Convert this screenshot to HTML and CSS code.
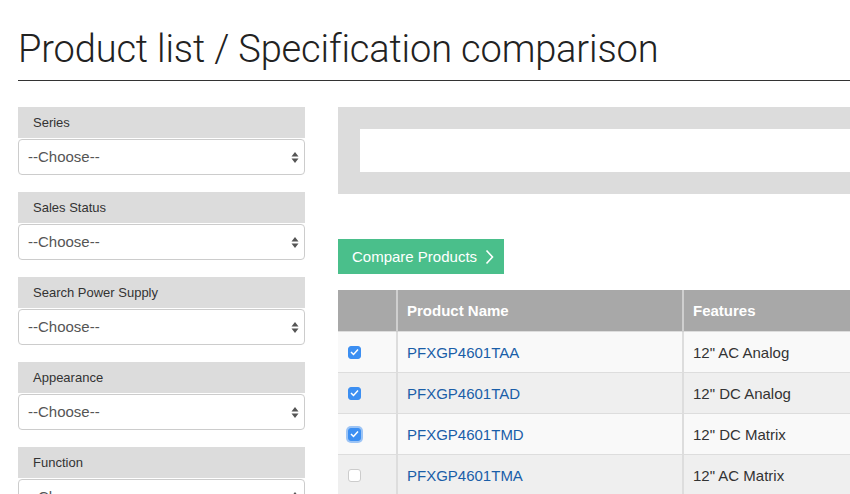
FILE: index.html
```html
<!DOCTYPE html>
<html>
<head>
<meta charset="utf-8">
<link rel="stylesheet" href="styles.css">
</head>
<body>
<div class="page">
  <h1 class="title">Product list / Specification comparison</h1>
  <div class="rule"></div>
  <div class="main">
    <aside class="filters">
      <div class="filter">
        <div class="flabel">Series</div>
        <div class="sel"><span>--Choose--</span><svg class="arr" width="8" height="13" viewBox="0 0 8 13"><path d="M4 1 L7.5 5.5 H0.5 Z M4 12 L7.5 7.5 H0.5 Z" fill="#555"/></svg></div>
      </div>
      <div class="filter">
        <div class="flabel">Sales Status</div>
        <div class="sel"><span>--Choose--</span><svg class="arr" width="8" height="13" viewBox="0 0 8 13"><path d="M4 1 L7.5 5.5 H0.5 Z M4 12 L7.5 7.5 H0.5 Z" fill="#555"/></svg></div>
      </div>
      <div class="filter">
        <div class="flabel">Search Power Supply</div>
        <div class="sel"><span>--Choose--</span><svg class="arr" width="8" height="13" viewBox="0 0 8 13"><path d="M4 1 L7.5 5.5 H0.5 Z M4 12 L7.5 7.5 H0.5 Z" fill="#555"/></svg></div>
      </div>
      <div class="filter">
        <div class="flabel">Appearance</div>
        <div class="sel"><span>--Choose--</span><svg class="arr" width="8" height="13" viewBox="0 0 8 13"><path d="M4 1 L7.5 5.5 H0.5 Z M4 12 L7.5 7.5 H0.5 Z" fill="#555"/></svg></div>
      </div>
      <div class="filter">
        <div class="flabel">Function</div>
        <div class="sel"><span>--Choose--</span><svg class="arr" width="8" height="13" viewBox="0 0 8 13"><path d="M4 1 L7.5 5.5 H0.5 Z M4 12 L7.5 7.5 H0.5 Z" fill="#555"/></svg></div>
      </div>
    </aside>
    <section class="content">
      <div class="searchbox"><div class="searchinner"></div></div>
      <button class="compare">Compare Products <svg width="9" height="16" viewBox="0 0 9 16"><path d="M1.5 1.5 L7.5 8 L1.5 14.5" fill="none" stroke="#fff" stroke-width="1.6"/></svg></button>
      <table class="ptable">
        <thead>
          <tr><th class="ck"></th><th class="name">Product Name</th><th>Features</th></tr>
        </thead>
        <tbody>
          <tr><td class="ck"><span class="cb on"><svg width="9" height="8" viewBox="0 0 9 8"><path d="M1 4 L3.5 6.5 L8 1.5" fill="none" stroke="#fff" stroke-width="1.5"/></svg></span></td><td><a href="#">PFXGP4601TAA</a></td><td>12" AC Analog</td></tr>
          <tr><td class="ck"><span class="cb on"><svg width="9" height="8" viewBox="0 0 9 8"><path d="M1 4 L3.5 6.5 L8 1.5" fill="none" stroke="#fff" stroke-width="1.5"/></svg></span></td><td><a href="#">PFXGP4601TAD</a></td><td>12" DC Analog</td></tr>
          <tr><td class="ck"><span class="cb on focus"><svg width="9" height="8" viewBox="0 0 9 8"><path d="M1 4 L3.5 6.5 L8 1.5" fill="none" stroke="#fff" stroke-width="1.5"/></svg></span></td><td><a href="#">PFXGP4601TMD</a></td><td>12" DC Matrix</td></tr>
          <tr><td class="ck"><span class="cb"></span></td><td><a href="#">PFXGP4601TMA</a></td><td>12" AC Matrix</td></tr>
        </tbody>
      </table>
    </section>
  </div>
</div>
</body>
</html>
```
FILE: styles.css
```css
html, body {
  margin: 0;
  padding: 0;
  background: #fff;
  overflow: hidden;
}
body {
  font-family: "Liberation Sans", Arial, sans-serif;
  color: #333;
}
.page {
  padding-left: 18px;
  width: 1100px;
}
.title {
  font-family: Roboto, "Liberation Sans", sans-serif;
  font-weight: 300;
  font-size: 38px;
  line-height: 44px;
  margin: 0;
  padding-top: 27px;
  color: #222;
  letter-spacing: -0.14px;
}
.rule {
  height: 1px;
  background: #333;
  margin-top: 9px;
}
.main {
  display: flex;
  gap: 33px;
  margin-top: 26px;
}
.filters {
  width: 287px;
  flex: none;
  display: flex;
  flex-direction: column;
  gap: 17px;
}
.flabel {
  background: #dcdcdc;
  height: 31px;
  line-height: 31px;
  padding-left: 15px;
  font-size: 13px;
  color: #333;
  margin-bottom: 1px;
}
.sel {
  position: relative;
  height: 34px;
  border: 1px solid #ccc;
  border-radius: 4px;
  background: #fff;
  padding-left: 9px;
  line-height: 34px;
  font-size: 15px;
  color: #555;
}
.arr {
  position: absolute;
  right: 5px;
  top: 11px;
}
.content {
  width: 720px;
  flex: none;
}
.searchbox {
  background: #dcdcdc;
  padding: 22px;
}
.searchinner {
  height: 43px;
  background: #fff;
}
.compare {
  display: flex;
  align-items: center;
  gap: 8px;
  margin-top: 45px;
  height: 35px;
  padding: 0 10px 0 14px;
  background: #4abf8b;
  border: none;
  color: #fff;
  font-family: "Liberation Sans", Arial, sans-serif;
  font-size: 15px;
}
.ptable {
  margin-top: 16px;
  border-collapse: collapse;
  width: 720px;
  font-size: 15px;
}
.ptable th {
  background: #a8a8a8;
  color: #fff;
  font-weight: bold;
  text-align: left;
  height: 41px;
  padding: 0 9px;
  border-left: 2px solid #cfcfcf;
  box-sizing: border-box;
}
.ptable th:first-child, .ptable td:first-child { border-left: none; }
.ptable td {
  height: 41px;
  padding: 1px 9px 0;
  border-left: 2px solid #ddd;
  border-top: 1px solid #ddd;
  box-sizing: border-box;
  color: #333;
}
.ptable th.ck, .ptable td.ck { width: 59px; padding: 1px 0 0 10px; }
.ptable th.name { width: 286px; }
.ptable tbody tr:nth-child(odd) td { background: #f9f9f9; }
.ptable tbody tr:nth-child(even) td { background: #efefef; }
.ptable a {
  color: #1a5ea8;
  text-decoration: none;
}
.cb {
  display: flex;
  align-items: center;
  justify-content: center;
  width: 13px;
  height: 13px;
  border-radius: 3px;
  border: 1px solid #ccc;
  background: #fff;
  box-sizing: border-box;
}
.cb.on {
  background: #3c8ff2;
  border-color: #3c8ff2;
}
.cb.focus {
  box-shadow: 0 0 0 2px #9cc4f5;
}
```
